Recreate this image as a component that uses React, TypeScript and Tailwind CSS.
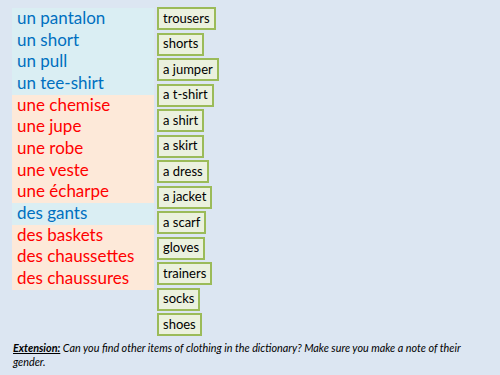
import React from "react";

const rows: { t: string; g: "m" | "f" }[] = [
  { t: "un pantalon", g: "m" },
  { t: "un short", g: "m" },
  { t: "un pull", g: "m" },
  { t: "un tee-shirt", g: "m" },
  { t: "une chemise", g: "f" },
  { t: "une jupe", g: "f" },
  { t: "une robe", g: "f" },
  { t: "une veste", g: "f" },
  { t: "une écharpe", g: "f" },
  { t: "des gants", g: "m" },
  { t: "des baskets", g: "f" },
  { t: "des chaussettes", g: "f" },
  { t: "des chaussures", g: "f" },
];

const words = [
  "trousers",
  "shorts",
  "a jumper",
  "a t-shirt",
  "a shirt",
  "a skirt",
  "a dress",
  "a jacket",
  "a scarf",
  "gloves",
  "trainers",
  "socks",
  "shoes",
];

export default function App() {
  return (
    <div
      className="w-[500px] h-[375px] bg-[#dce6f2] overflow-hidden flex flex-col"
      style={{ fontFamily: "Lato, 'Open Sans', sans-serif" }}
    >
      <div className="flex flex-row items-start">
        <div className="ml-[12px] mt-[8px] w-[142px] flex flex-col">
          {rows.map((r) =>
            r.g === "m" ? (
              <div
                key={r.t}
                className="h-[21.7px] flex items-center pl-[5px] pb-[3px] bg-[#daeef3] text-[#0070c0] text-[17px] leading-none whitespace-nowrap"
              >
                {r.t}
              </div>
            ) : (
              <div
                key={r.t}
                className="h-[21.7px] flex items-center pl-[5px] pb-[3px] bg-[#fde9d9] text-[#ff0000] text-[17px] leading-none whitespace-nowrap"
              >
                {r.t}
              </div>
            )
          )}
        </div>
        <div className="ml-[3px] mt-[7px] flex flex-col gap-[2.5px] items-start">
          {words.map((w) => (
            <div
              key={w}
              className="h-[23px] flex items-center px-[4px] pb-[1px] border-2 border-[#9bbb59] bg-[#ebf1de] text-black text-[13px] leading-none whitespace-nowrap"
            >
              {w}
            </div>
          ))}
        </div>
      </div>
      <p className="ml-[13px] mt-[5px] w-[465px] text-[10.8px] leading-[14px] italic text-black">
        <span className="font-bold underline">Extension:</span> Can you find other items of clothing in the dictionary? Make sure you make a note of their gender.
      </p>
    </div>
  );
}
